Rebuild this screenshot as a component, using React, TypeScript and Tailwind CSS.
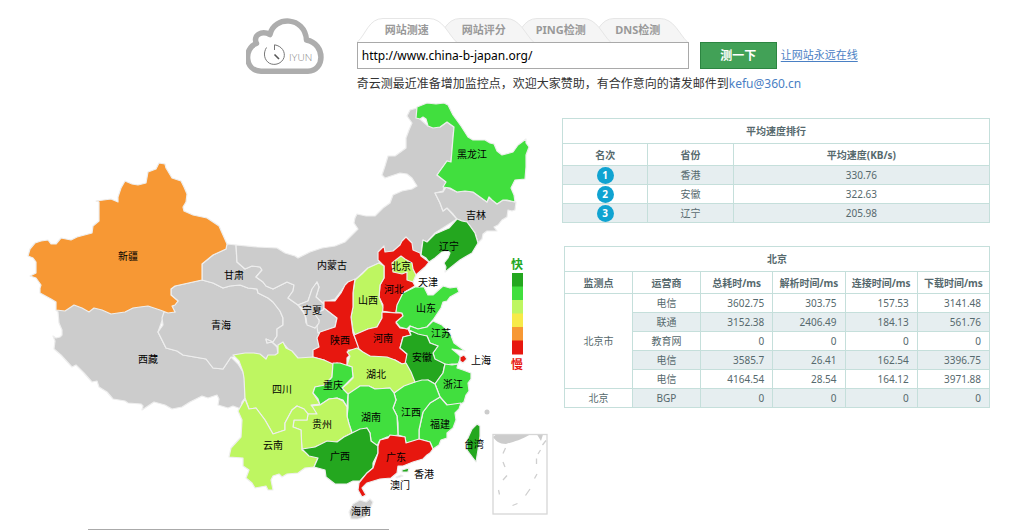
import { useState } from 'react';

const tabs = [
  { label: '网站测速', layer: 'z-30' },
  { label: '网站评分', layer: 'z-20' },
  { label: 'PING检测', layer: 'z-10' },
  { label: 'DNS检测', layer: 'z-0' },
];

const FASTEST = '#24a71f';
const FAST = '#41df3e';
const NORMAL = '#bef661';
const MEDIUM = '#f7ea48';
const SLOW = '#f79834';
const SLOWEST = '#e7170f';
const NONE = '#cccccc';

const legend = [FASTEST, FAST, NORMAL, MEDIUM, SLOW, SLOWEST];

const provinces = [
  {
    name: '西藏', x: 148, y: 359, fill: NONE,
    points: '56,310 58,312 59,323 62,330 62,335 60,337 56,338 53,336 55,341 54,349 61,355 72,367 76,365 84,373 92,382 97,381 99,387 107,392 113,399 125,401 128,403 141,404 143,406 142,410 148,406 154,402 165,405 172,409 182,407 190,402 202,396 208,398 217,395 219,399 218,405 228,408 233,406 241,409 242,402 245,398 245,380 243,372 238,364 231,357 223,369 213,368 206,359 183,355 177,351 166,348 158,332 163,318 168,313 160,309 148,305 133,307 125,311 111,313 102,308 94,307 89,310 82,306 74,304 65,310',
  },
  {
    name: '青海', x: 221, y: 325, fill: NONE,
    points: '164,312 175,312 172,307 178,301 171,295 171,289 175,286 202,280 213,283 223,288 230,286 240,285 248,288 257,289 258,293 268,298 273,302 280,311 283,318 283,325 277,329 277,336 273,342 266,339 267,343 272,342 277,347 278,354 266,361 260,355 245,355 233,357 231,357 223,369 213,368 206,359 183,355 177,351 166,348 158,332 163,325 162,318',
  },
  {
    name: '甘肃', x: 234, y: 275, fill: NONE,
    points: '227,244 236,245 237,262 245,269 252,266 260,267 262,270 256,277 263,282 266,286 273,289 287,282 294,285 293,291 288,298 298,305 305,315 306,323 315,328 320,320 325,325 335,327 319,334 319,347 314,350 313,358 298,359 288,349 283,343 278,347 272,342 267,343 266,339 273,342 277,336 277,329 283,325 283,318 280,311 273,302 268,298 258,293 257,289 248,288 240,285 230,286 223,288 213,283 202,280 202,264 213,255 226,249',
  },
  {
    name: '内蒙古', x: 332, y: 265, fill: NONE,
    points: '236,245 257,247 277,248 285,253 295,256 298,258 310,252 322,248 335,246 345,242 352,235 358,229 354,223 355,218 357,214 366,216 375,216 383,208 390,203 393,195 402,191 412,189 417,186 412,178 407,174 400,173 394,175 385,178 382,175 385,166 388,156 395,156 406,148 406,138 409,130 412,123 407,116 410,110 417,108 420,119 428,126 440,127 447,122 454,127 453,138 451,162 447,161 437,175 446,182 443,191 435,193 440,203 443,211 447,208 455,217 457,219 435,233 427,242 423,240 421,253 384,260 379,263 368,268 355,280 348,282 335,299 324,302 324,308 337,318 335,327 318,333 317,327 319,320 312,315 323,310 325,305 316,297 319,287 317,282 312,290 308,301 298,305 288,298 293,291 294,285 287,282 273,289 266,286 263,282 256,277 262,270 260,267 252,266 245,269 237,262',
  },
  {
    name: '宁夏', x: 312, y: 310, fill: NONE,
    points: '298,305 308,301 310,295 312,289 317,282 319,287 316,297 325,305 323,310 314,313 319,320 319,323 315,328 307,325 306,318 302,308',
  },
  {
    name: '新疆', x: 128, y: 256, fill: SLOW,
    points: '159,163 165,164 166,168 172,178 181,181 184,187 187,194 186,202 183,207 184,211 193,215 207,218 219,226 223,235 227,244 226,249 213,255 202,264 202,280 175,286 171,289 171,295 178,301 175,305 172,306 175,312 168,313 160,310 148,306 140,307 133,308 125,312 111,314 102,310 94,308 89,312 82,308 74,305 65,311 56,310 56,302 51,299 40,293 40,288 41,285 36,278 30,276 36,273 36,262 33,258 28,256 30,249 35,243 41,241 48,240 51,244 56,244 61,238 71,240 77,237 92,233 93,226 99,221 99,202 96,201 111,199 118,202 118,197 121,188 125,181 132,184 138,185 146,183 148,172 156,169',
  },
  {
    name: '吉林', x: 476, y: 215, fill: NONE,
    points: '435,193 443,192 446,187 457,192 465,191 473,192 480,197 487,202 489,197 497,204 503,200 516,202 515,210 512,211 508,210 507,217 502,220 498,225 494,227 497,231 487,231 483,234 482,239 478,243 475,233 470,226 467,222 462,221 457,219 453,214 447,208 443,211 440,203',
  },
  {
    name: '黑龙江', x: 472, y: 154, fill: FAST,
    points: '417,107 427,103 436,104 444,103 448,105 453,115 461,126 468,137 473,140 485,140 490,143 494,144 497,151 502,155 513,152 518,145 526,139 526,143 529,147 526,155 526,167 525,179 515,180 511,188 514,195 515,202 507,200 503,200 497,204 492,200 489,197 487,202 480,197 473,192 465,191 457,192 450,188 443,187 446,182 437,175 447,161 451,162 453,138 454,127 447,122 440,127 433,128 428,126 426,119 423,117 420,119 416,118',
  },
  {
    name: '辽宁', x: 449, y: 246, fill: FASTEST,
    points: '457,219 462,221 467,222 470,226 475,233 478,243 472,253 465,257 460,260 445,272 446,267 444,263 448,258 450,253 448,251 442,252 435,258 429,262 426,258 421,255 423,240 427,242 435,234 449,228',
  },
  {
    name: '河北', x: 394, y: 289, fill: SLOWEST,
    points: '384,246 385,252 393,251 400,245 402,241 406,237 412,243 413,250 420,253 421,256 429,262 425,267 417,274 414,275 413,282 415,286 403,293 397,307 396,313 381,311 383,305 379,297 380,285 384,278 384,266 378,260 378,252',
  },
  {
    name: '北京', x: 401, y: 266, fill: NORMAL,
    points: '401,256 405,259 412,263 413,269 416,275 413,282 407,280 407,272 402,274 393,272 392,263 397,259',
  },
  {
    name: '山西', x: 368, y: 300, fill: NORMAL,
    points: '379,263 384,266 384,278 380,285 379,297 383,307 382,318 377,327 368,329 355,335 353,330 351,317 353,307 353,293 355,280 362,274 368,268',
  },
  {
    name: '陕西', x: 340, y: 340, fill: SLOWEST,
    points: '355,279 354,285 353,293 353,307 351,317 353,333 359,347 357,350 348,350 350,355 347,358 347,366 337,363 332,365 324,360 313,357 313,350 319,347 317,338 320,332 335,327 337,318 324,308 324,301 335,301 341,293 345,285 348,282',
  },
  {
    name: '河南', x: 383, y: 338, fill: SLOWEST,
    points: '382,312 396,313 402,313 403,317 396,323 400,328 408,329 411,335 403,337 400,348 407,354 407,363 402,364 395,360 387,358 376,357 367,356 359,349 354,335 368,329 377,327 382,318',
  },
  {
    name: '山东', x: 426, y: 308, fill: FAST,
    points: '415,287 424,287 428,295 433,295 443,286 450,288 457,287 459,292 450,297 447,301 443,302 441,308 437,314 433,320 427,327 418,329 410,326 407,329 400,327 396,322 403,316 402,313 396,312 397,305 403,293',
  },
  {
    name: '江苏', x: 441, y: 333, fill: FAST,
    points: '433,321 442,325 450,333 454,343 465,351 452,349 458,354 461,357 458,364 452,364 445,365 435,361 433,353 438,346 430,343 427,336 418,335 409,330 410,326 418,329 427,327',
  },
  { name: '上海', x: 481, y: 360, fill: SLOWEST, points: '460,357 464,355 467,359 463,363 460,361' },
  {
    name: '安徽', x: 422, y: 357, fill: FASTEST,
    points: '409,330 418,334 427,336 430,343 438,346 433,353 435,359 445,364 443,373 440,377 435,384 428,380 422,381 415,383 408,372 405,364 407,354 400,348 403,337 411,335',
  },
  {
    name: '浙江', x: 453, y: 384, fill: FAST,
    points: '445,364 452,365 458,364 457,368 463,370 471,373 471,379 468,383 469,391 466,395 464,402 461,404 447,405 440,397 435,384 440,377 443,373',
  },
  {
    name: '福建', x: 440, y: 424, fill: FAST,
    points: '440,397 447,405 461,403 459,409 455,413 456,420 453,428 447,433 447,438 441,440 439,445 433,449 430,442 419,439 419,430 423,412 430,403',
  },
  {
    name: '江西', x: 411, y: 412, fill: FAST,
    points: '415,382 422,380 428,380 435,384 440,397 430,403 423,412 419,430 419,440 406,443 405,437 398,435 398,423 397,416 393,408 396,400 394,393 404,385',
  },
  {
    name: '湖北', x: 376, y: 374, fill: NORMAL,
    points: '347,352 351,350 357,348 363,352 370,356 387,357 395,360 402,364 406,363 411,372 415,382 404,386 394,393 390,388 375,389 369,386 360,386 348,395 342,388 347,384 353,378 352,367 347,365 350,356',
  },
  {
    name: '湖南', x: 371, y: 417, fill: FAST,
    points: '348,394 360,386 369,386 375,389 390,388 394,393 396,400 393,408 397,416 398,435 387,437 380,440 377,446 371,441 370,433 367,428 360,430 352,433 349,424 347,417 348,408',
  },
  {
    name: '四川', x: 282, y: 389, fill: NORMAL,
    points: '233,355 245,353 254,353 260,354 266,359 268,355 275,355 278,353 278,345 283,342 286,348 292,351 298,358 313,357 324,360 333,364 332,377 325,385 315,387 313,393 320,404 311,405 317,411 316,414 308,414 304,409 297,406 292,410 285,423 285,430 273,434 265,420 256,408 249,409 245,398 244,378 243,372 239,361',
  },
  {
    name: '重庆', x: 333, y: 385, fill: FAST,
    points: '333,363 340,363 352,367 353,377 342,388 348,394 347,407 343,400 337,398 329,399 320,405 318,399 313,393 315,387 325,385 332,377',
  },
  {
    name: '贵州', x: 322, y: 424, fill: NORMAL,
    points: '337,398 343,401 347,407 347,416 349,424 352,433 344,437 337,442 327,442 315,447 310,449 302,449 301,437 301,430 293,427 294,420 307,420 308,414 317,414 312,406 320,405 329,399',
  },
  {
    name: '云南', x: 273, y: 445, fill: NORMAL,
    points: '245,399 249,409 256,408 265,420 273,434 285,430 285,423 292,410 297,406 304,409 308,414 307,420 294,420 293,427 301,430 302,450 309,454 318,458 314,467 305,468 298,473 287,474 282,477 279,474 273,476 271,480 273,490 268,490 266,486 255,488 252,483 246,478 249,470 243,466 243,458 229,457 231,448 241,437 242,420 238,411',
  },
  {
    name: '广西', x: 340, y: 456, fill: FASTEST,
    points: '302,449 315,447 327,441 337,442 344,437 352,433 360,429 367,428 370,433 371,441 378,446 378,453 373,463 373,468 367,473 360,481 353,481 347,484 335,484 326,477 325,470 314,467 318,458 309,456',
  },
  {
    name: '广东', x: 396, y: 457, fill: SLOWEST,
    points: '380,440 388,438 390,435 398,436 405,437 406,443 419,439 430,442 433,449 430,453 427,455 423,459 413,462 403,466 398,466 397,473 391,478 380,479 367,483 362,488 366,495 362,497 358,490 359,483 367,473 373,468 378,453 378,446',
  },
  { name: '香港', x: 424, y: 474, fill: FASTEST, points: '402,470 409,468 408,472 402,472' },
  { name: '澳门', x: 400, y: 485, fill: NONE, points: '396,477 401,475 403,476 397,478' },
  {
    name: '海南', x: 361, y: 511, fill: NONE,
    points: '353,504 360,500 366,502 370,499 373,502 370,509 365,517 358,519 351,519 349,512',
  },
  { name: '台湾', x: 474, y: 444, fill: FASTEST, points: '477,424 480,426 480,436 478,450 476,462 467,450 467,440 472,429' },
];

const extraLabels = [{ name: '天津', x: 428, y: 282 }];

const ranking = [
  { place: 1, province: '香港', speed: '330.76' },
  { place: 2, province: '安徽', speed: '322.63' },
  { place: 3, province: '辽宁', speed: '205.98' },
];

const monitors = [
  {
    point: '北京市',
    rows: [
      ['电信', '3602.75', '303.75', '157.53', '3141.48'],
      ['联通', '3152.38', '2406.49', '184.13', '561.76'],
      ['教育网', '0', '0', '0', '0'],
      ['电信', '3585.7', '26.41', '162.54', '3396.75'],
      ['电信', '4164.54', '28.54', '164.12', '3971.88'],
    ],
  },
  { point: '北京', rows: [['BGP', '0', '0', '0', '0']] },
];

const monitorHeads = ['监测点', '运营商', '总耗时/ms', '解析时间/ms', '连接时间/ms', '下载时间/ms'];

const cell = 'border border-[#c5dfdb] p-0';

function Logo() {
  return (
    <svg viewBox="0 0 78 57" className="w-[78px] shrink-0" role="img" aria-label="QIYUN">
      <path
        d="M15 53.2C-1.500 53-2.500 30 10.500 25.500C6.500 17.500 15.500 12 24 16.500C28-2.500 59-2 60.500 22C80 26 79 53 62 53.200Z"
        fill="none"
        stroke="#adadad"
        strokeWidth="5.500"
        strokeLinejoin="round"
      />
      <path d="M20.500 29.500C17 35 18 42 23.500 45.300C29 48 36 45.500 38 39.500C39.500 34 36 28 28.500 26.800V32" fill="none" stroke="#777" strokeWidth="1" />
      <path d="M28.500 36.500L33 41" stroke="#555" strokeWidth="1.600" />
      <text x="43" y="43" fontSize="10" fill="#808080" className="font-['Lato'] font-light">IYUN</text>
    </svg>
  );
}

function ChinaMap() {
  return (
    <svg viewBox="24 98 524 424" className="w-full" role="img" aria-label="全国测速地图">
      <g stroke="#eeeeee" strokeWidth="1.200" strokeLinejoin="round">
        {provinces.map((p) => (
          <polygon key={p.name} points={p.points} fill={p.fill} />
        ))}
      </g>
      <circle cx="487" cy="412" r="2.500" fill={NONE} />

      {/* South China Sea inset */}
      <path d="M493 437L496 434.500H530C521 440 513 442 506 444C499 444 496 441 493 437ZM537 434.500H543L541 441Z" fill={NONE} />
      <rect x="493" y="434.500" width="54" height="79.500" fill="none" stroke="#d6d6d6" strokeWidth="1.300" />
      <path
        d="M505.500 448L503 453.500M503 462L505 467M507 475.500L503 480M498.500 490L499.500 494.500M512.500 505.500L517.500 503.500M525.500 495.500L530 489M534.500 478.500L537 474M536.500 464V458.500M538 454L540.500 450M542.500 445L546 440.500"
        stroke="#cfcfcf"
        strokeWidth="1.300"
      />

      {/* Speed legend */}
      {legend.map((color, i) => (
        <rect key={color} x="512" y={273 + i * 13.5} width="11" height="14" fill={color} />
      ))}
      <g fontSize="12" fontWeight="700" textAnchor="middle">
        <text x="517" y="269" fill={FASTEST}>快</text>
        <text x="517" y="369" fill={SLOWEST}>慢</text>
      </g>

      <g fontSize="10" fill="#000" textAnchor="middle">
        {[...provinces, ...extraLabels].map((p) => (
          <text key={p.name} x={p.x} y={p.y + 4}>{p.name}</text>
        ))}
      </g>
    </svg>
  );
}

function RankingTable() {
  return (
    <table className="w-full table-fixed border-collapse text-center">
      <thead>
        <tr className="h-[25px]">
          <th colSpan={5} className={cell}>平均速度排行</th>
        </tr>
        <tr className="h-[22px]">
          <th className={cell}>名次</th>
          <th className={cell}>省份</th>
          <th colSpan={3} className={cell}>平均速度(KB/s)</th>
        </tr>
      </thead>
      <tbody>
        {ranking.map((r) => (
          <tr key={r.place} className="h-[19px] odd:bg-[#e6eef0]">
            <td className={cell}>
              <span className="mx-auto flex size-[17px] items-center justify-center rounded-full bg-[#10a3d1] font-bold text-white">
                {r.place}
              </span>
            </td>
            <td className={cell}>{r.province}</td>
            <td colSpan={3} className={cell}>{r.speed}</td>
          </tr>
        ))}
      </tbody>
    </table>
  );
}

function MonitorTable() {
  return (
    <table className="w-full table-fixed border-collapse text-center">
      <colgroup>
        <col className="w-[16%]" />
        <col className="w-[16%]" />
        <col className="w-[17%]" />
        <col className="w-[17%]" />
        <col className="w-[17%]" />
        <col className="w-[17%]" />
      </colgroup>
      <thead>
        <tr className="h-[25px]">
          <th colSpan={6} className={cell}>北京</th>
        </tr>
        <tr className="h-[22px]">
          {monitorHeads.map((head) => (
            <th key={head} className={`${cell} whitespace-nowrap`}>{head}</th>
          ))}
        </tr>
      </thead>
      <tbody>
        {monitors.map((m) =>
          m.rows.map(([isp, ...times], i) => {
            const striped = i % 2 === 1 || m.rows.length === 1;
            const bg = striped ? 'bg-[#e6eef0]' : '';
            return (
              <tr key={`${m.point}-${i}`} className="h-[19px]">
                {i === 0 && (
                  <td rowSpan={m.rows.length} className={cell}>{m.point}</td>
                )}
                <td className={`${cell} ${bg}`}>{isp}</td>
                {times.map((time, j) => (
                  <td key={j} className={`border border-[#c5dfdb] py-0 pr-2 pl-0 text-right ${bg}`}>{time}</td>
                ))}
              </tr>
            );
          }),
        )}
      </tbody>
    </table>
  );
}

export default function App() {
  const [active, setActive] = useState(0);
  const [url, setUrl] = useState('http://www.china-b-japan.org/');

  return (
    <div className="bg-white font-['Noto_Sans','Noto_Sans_CJK_SC',sans-serif] text-[#333]">
      <header className="flex items-start gap-[33px] pt-[18px] pl-[24%]">
        <Logo />
        <div className="flex-1">
          <div className="flex">
            {tabs.map((tab, i) => (
              <button
                key={tab.label}
                type="button"
                onClick={() => setActive(i)}
                className={`relative -mr-[23px] h-6 w-[100px] text-[11px] font-bold text-[#999] ${tab.layer}`}
              >
                <svg viewBox="0 0 100 24" className="absolute inset-0 -z-10 h-full w-full">
                  <path
                    d="M0.500 24C9 16 12 0.500 26 0.500H72C86 0.500 91 16 99.500 24"
                    fill={active === i ? '#fff' : '#f5f5f5'}
                    stroke="#e6e6e6"
                  />
                </svg>
                {tab.label}
              </button>
            ))}
          </div>
          <form className="flex items-center" onSubmit={(e) => e.preventDefault()}>
            <input
              type="text"
              aria-label="网址"
              value={url}
              onChange={(e) => setUrl(e.target.value)}
              className="h-[27px] w-[332px] border border-[#a9a9a9] px-1 text-[12px] text-black"
            />
            <button type="submit" className="ml-[11px] h-[27px] w-[77px] border border-[#2c8541] bg-[#42a157] text-[12px] font-bold text-white">
              测一下
            </button>
            <a href="#" className="ml-1 text-[11px] text-[#4a80c4] underline underline-offset-2">让网站永远在线</a>
          </form>
          <p className="mt-1.5 text-[12px] leading-[18px]">
            奇云测最近准备增加监控点，欢迎大家赞助，有合作意向的请发邮件到
            <a href="mailto:kefu@360.cn" className="text-[#4a80c4]">kefu@360.cn</a>
          </p>
        </div>
      </header>

      <main className="flex items-start gap-[14px] pt-[5px] pr-[34px] pl-6">
        <div className="min-w-0 flex-[524]">
          <ChinaMap />
        </div>
        <div className="flex min-w-0 flex-[428] flex-col gap-[23px] pt-5 text-[10px] leading-[14px] text-[#56696d]">
          <RankingTable />
          <div className="pl-0.5">
            <MonitorTable />
          </div>
        </div>
      </main>

      <div className="mt-[7px] mr-[62%] ml-[88px] h-px bg-[#aaa]" />
    </div>
  );
}
